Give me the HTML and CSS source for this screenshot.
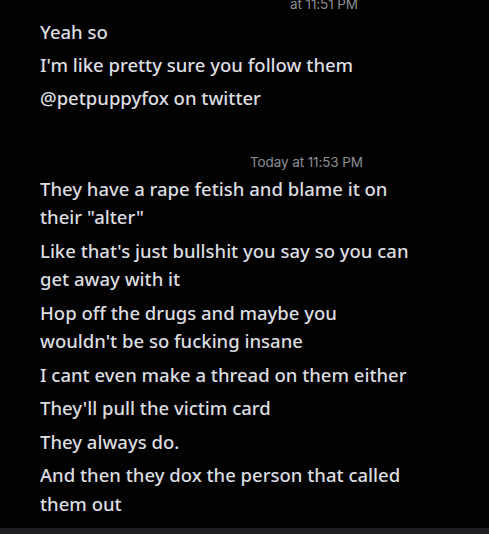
FILE: index.html
```html
<!DOCTYPE html>
<html>
<head>
<meta charset="utf-8">
<link rel="stylesheet" href="styles.css">
</head>
<body>
<div class="chat">
  <div class="group first">
    <div class="stamp stamp-top">at 11:51 PM</div>
    <div class="msg">Yeah so</div>
    <div class="msg">I'm like pretty sure you follow them</div>
    <div class="msg">@petpuppyfox on twitter</div>
  </div>
  <div class="group second">
    <div class="stamp stamp-today">Today at 11:53 PM</div>
    <div class="msg">They have a rape fetish and blame it on<br>their "alter"</div>
    <div class="msg">Like that's just bullshit you say so you can<br>get away with it</div>
    <div class="msg">Hop off the drugs and maybe you<br>wouldn't be so fucking insane</div>
    <div class="msg">I cant even make a thread on them either</div>
    <div class="msg">They'll pull the victim card</div>
    <div class="msg">They always do.</div>
    <div class="msg">And then they dox the person that called<br>them out</div>
  </div>
</div>
<div class="bottom-bar"></div>
</body>
</html>
```
FILE: styles.css
```css
html, body {
  margin: 0;
  padding: 0;
  background: #020202;
  height: 100%;
}
body {
  display: flex;
  flex-direction: column;
  font-family: "Noto Sans", sans-serif;
  color: #dcdde0;
}
.chat {
  flex: 1;
  overflow: hidden;
  padding-left: 40px;
}
.group {
  display: flex;
  flex-direction: column;
  gap: 4px;
}
.stamp {
  font-family: "Inter", sans-serif;
  font-size: 13.5px;
  letter-spacing: -0.1px;
  color: #8b8e95;
  line-height: 15px;
}
.stamp-top {
  margin-top: -3px;
  padding-left: 250px;
  margin-bottom: 1px;
}
.stamp-today {
  padding-left: 210px;
  margin-bottom: -0.5px;
}
.second {
  margin-top: 43px;
  gap: 5px;
}
.msg {
  font-size: 18.5px;
  font-weight: 500;
  line-height: 29px;
}
.second .msg {
  line-height: 28.5px;
}
.bottom-bar {
  height: 6px;
  background: #1e1f22;
}
```
